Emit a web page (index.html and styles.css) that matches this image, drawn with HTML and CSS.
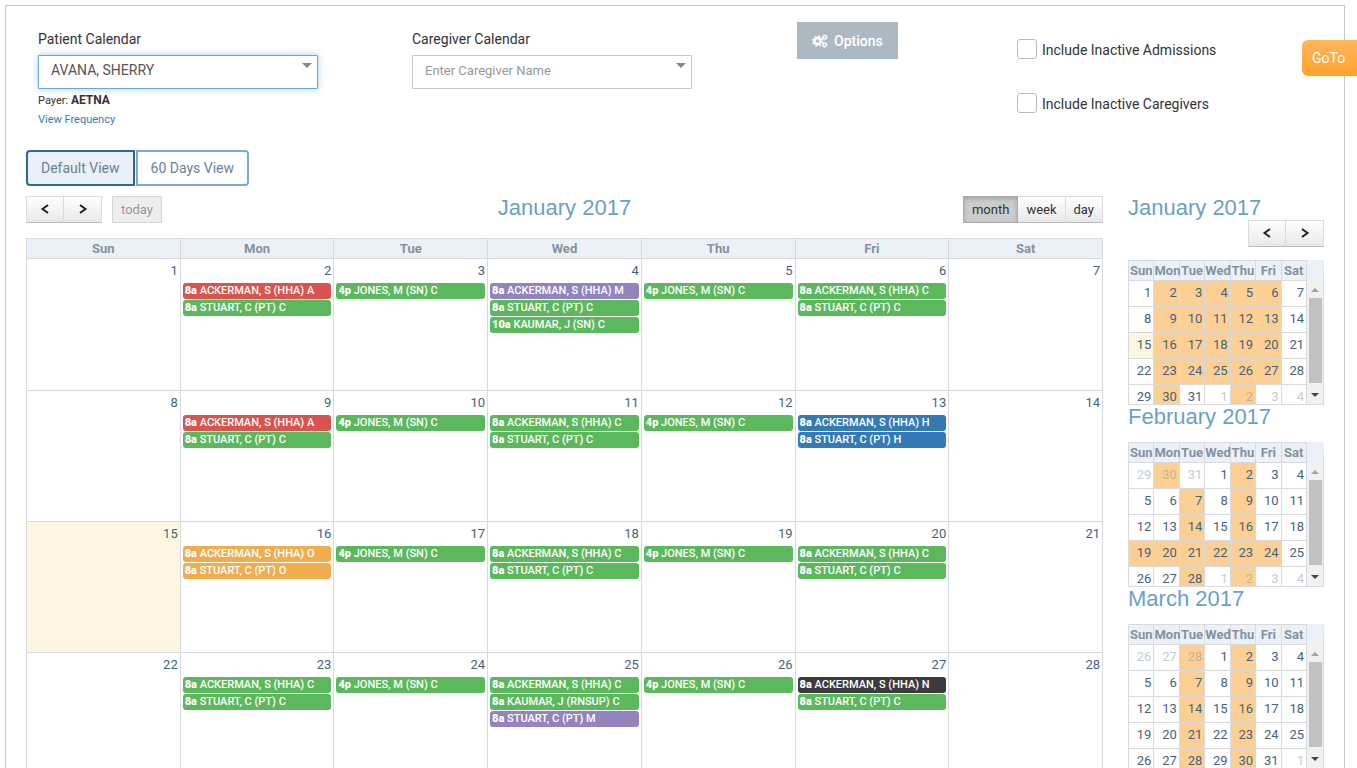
FILE: index.html
```html
<!DOCTYPE html>
<html lang="en">
<head>
  <meta charset="UTF-8" />
  <title>Patient Calendar</title>
  <link rel="stylesheet" href="styles.css">
</head>
<body>

<a class="goto" href="#">GoTo</a>

<div class="page">

  <!-- filters -->
  <form class="filters">
    <div class="field">
      <label for="patient">Patient Calendar</label>
      <div class="select-box">
        <select id="patient" class="active"><option>AVANA, SHERRY</option></select>
      </div>
      <p class="payer">Payer: <b>AETNA</b></p>
      <a class="freq" href="#">View Frequency</a>
    </div>
    <div class="field">
      <label for="caregiver">Caregiver Calendar</label>
      <div class="select-box">
        <select id="caregiver" class="empty"><option>Enter Caregiver Name</option></select>
      </div>
    </div>
    <div>
      <button type="button" class="options-btn">
        <svg width="16" height="14" viewBox="0 0 16 14" fill="none" stroke="#fff">
          <circle cx="5.5" cy="7" r="3" stroke-width="2.4"/>
          <circle cx="5.5" cy="7" r="4.7" stroke-width="1.6" stroke-dasharray="2 1.69"/>
          <circle cx="12.6" cy="3.3" r="1.6" stroke-width="1.3"/>
          <circle cx="12.6" cy="3.3" r="2.6" stroke-width="1" stroke-dasharray="1.2 .84"/>
          <circle cx="12.6" cy="10.7" r="1.6" stroke-width="1.3"/>
          <circle cx="12.6" cy="10.7" r="2.6" stroke-width="1" stroke-dasharray="1.2 .84"/>
        </svg>
        Options
      </button>
    </div>
    <div class="checks">
      <label><input type="checkbox"> <span>Include Inactive Admissions</span></label>
      <label><input type="checkbox"> <span>Include Inactive Caregivers</span></label>
    </div>
  </form>

  <div class="tabs">
    <button class="tab active">Default View</button>
    <button class="tab">60 Days View</button>
  </div>

  <div class="calendars">

    <!-- main month calendar -->
    <div class="main-cal">
      <div class="toolbar">
        <div class="left">
          <div class="btn-group">
            <button class="btn arrow" aria-label="Previous"><svg width="10" height="10" viewBox="0 0 10 10"><path d="M8 1 2.5 5 8 9"/></svg></button>
            <button class="btn arrow" aria-label="Next"><svg width="10" height="10" viewBox="0 0 10 10"><path d="M2 1 7.5 5 2 9"/></svg></button>
          </div>
          <button class="btn today-btn" disabled>today</button>
        </div>
        <h2>January 2017</h2>
        <div class="btn-group right">
          <button class="btn pressed">month</button>
          <button class="btn">week</button>
          <button class="btn">day</button>
        </div>
      </div>

      <table class="month">
        <thead>
          <tr><th>Sun</th><th>Mon</th><th>Tue</th><th>Wed</th><th>Thu</th><th>Fri</th><th>Sat</th></tr>
        </thead>
        <tbody>
          <tr>
            <td><span class="num">1</span></td>
            <td><span class="num">2</span>
              <a class="ev red" href="#"><b>8a</b> ACKERMAN, S (HHA) A</a>
              <a class="ev" href="#"><b>8a</b> STUART, C (PT) C</a></td>
            <td><span class="num">3</span>
              <a class="ev" href="#"><b>4p</b> JONES, M (SN) C</a></td>
            <td><span class="num">4</span>
              <a class="ev purple" href="#"><b>8a</b> ACKERMAN, S (HHA) M</a>
              <a class="ev" href="#"><b>8a</b> STUART, C (PT) C</a>
              <a class="ev" href="#"><b>10a</b> KAUMAR, J (SN) C</a></td>
            <td><span class="num">5</span>
              <a class="ev" href="#"><b>4p</b> JONES, M (SN) C</a></td>
            <td><span class="num">6</span>
              <a class="ev" href="#"><b>8a</b> ACKERMAN, S (HHA) C</a>
              <a class="ev" href="#"><b>8a</b> STUART, C (PT) C</a></td>
            <td><span class="num">7</span></td>
          </tr>
          <tr>
            <td><span class="num">8</span></td>
            <td><span class="num">9</span>
              <a class="ev red" href="#"><b>8a</b> ACKERMAN, S (HHA) A</a>
              <a class="ev" href="#"><b>8a</b> STUART, C (PT) C</a></td>
            <td><span class="num">10</span>
              <a class="ev" href="#"><b>4p</b> JONES, M (SN) C</a></td>
            <td><span class="num">11</span>
              <a class="ev" href="#"><b>8a</b> ACKERMAN, S (HHA) C</a>
              <a class="ev" href="#"><b>8a</b> STUART, C (PT) C</a></td>
            <td><span class="num">12</span>
              <a class="ev" href="#"><b>4p</b> JONES, M (SN) C</a></td>
            <td><span class="num">13</span>
              <a class="ev blue" href="#"><b>8a</b> ACKERMAN, S (HHA) H</a>
              <a class="ev blue" href="#"><b>8a</b> STUART, C (PT) H</a></td>
            <td><span class="num">14</span></td>
          </tr>
          <tr>
            <td class="today"><span class="num">15</span></td>
            <td><span class="num">16</span>
              <a class="ev orange" href="#"><b>8a</b> ACKERMAN, S (HHA) O</a>
              <a class="ev orange" href="#"><b>8a</b> STUART, C (PT) O</a></td>
            <td><span class="num">17</span>
              <a class="ev" href="#"><b>4p</b> JONES, M (SN) C</a></td>
            <td><span class="num">18</span>
              <a class="ev" href="#"><b>8a</b> ACKERMAN, S (HHA) C</a>
              <a class="ev" href="#"><b>8a</b> STUART, C (PT) C</a></td>
            <td><span class="num">19</span>
              <a class="ev" href="#"><b>4p</b> JONES, M (SN) C</a></td>
            <td><span class="num">20</span>
              <a class="ev" href="#"><b>8a</b> ACKERMAN, S (HHA) C</a>
              <a class="ev" href="#"><b>8a</b> STUART, C (PT) C</a></td>
            <td><span class="num">21</span></td>
          </tr>
          <tr>
            <td><span class="num">22</span></td>
            <td><span class="num">23</span>
              <a class="ev" href="#"><b>8a</b> ACKERMAN, S (HHA) C</a>
              <a class="ev" href="#"><b>8a</b> STUART, C (PT) C</a></td>
            <td><span class="num">24</span>
              <a class="ev" href="#"><b>4p</b> JONES, M (SN) C</a></td>
            <td><span class="num">25</span>
              <a class="ev" href="#"><b>8a</b> ACKERMAN, S (HHA) C</a>
              <a class="ev" href="#"><b>8a</b> KAUMAR, J (RNSUP) C</a>
              <a class="ev purple" href="#"><b>8a</b> STUART, C (PT) M</a></td>
            <td><span class="num">26</span>
              <a class="ev" href="#"><b>4p</b> JONES, M (SN) C</a></td>
            <td><span class="num">27</span>
              <a class="ev black" href="#"><b>8a</b> ACKERMAN, S (HHA) N</a>
              <a class="ev" href="#"><b>8a</b> STUART, C (PT) C</a></td>
            <td><span class="num">28</span></td>
          </tr>
        </tbody>
      </table>
    </div>

    <!-- side calendars -->
    <div class="side">
      <h2>January 2017</h2>
      <div class="btn-group side-nav">
        <button class="btn arrow" aria-label="Previous"><svg width="10" height="10" viewBox="0 0 10 10"><path d="M8 1 2.5 5 8 9"/></svg></button>
        <button class="btn arrow" aria-label="Next"><svg width="10" height="10" viewBox="0 0 10 10"><path d="M2 1 7.5 5 2 9"/></svg></button>
      </div>
      <div class="mini">
        <table>
          <thead><tr><th>Sun</th><th>Mon</th><th>Tue</th><th>Wed</th><th>Thu</th><th>Fri</th><th>Sat</th></tr></thead>
          <tbody>
            <tr><td>1</td><td class="hl">2</td><td class="hl">3</td><td class="hl">4</td><td class="hl">5</td><td class="hl">6</td><td>7</td></tr>
            <tr><td>8</td><td class="hl">9</td><td class="hl">10</td><td class="hl">11</td><td class="hl">12</td><td class="hl">13</td><td>14</td></tr>
            <tr><td class="today">15</td><td class="hl">16</td><td class="hl">17</td><td class="hl">18</td><td class="hl">19</td><td class="hl">20</td><td>21</td></tr>
            <tr><td>22</td><td class="hl">23</td><td class="hl">24</td><td class="hl">25</td><td class="hl">26</td><td class="hl">27</td><td>28</td></tr>
            <tr><td>29</td><td class="hl">30</td><td>31</td><td class="out">1</td><td class="hl out">2</td><td class="out">3</td><td class="out">4</td></tr>
          </tbody>
        </table>
        <div class="scroll"><i class="up"></i><i class="thumb"></i><i class="down"></i></div>
      </div>

      <h2>February 2017</h2>
      <div class="mini">
        <table>
          <thead><tr><th>Sun</th><th>Mon</th><th>Tue</th><th>Wed</th><th>Thu</th><th>Fri</th><th>Sat</th></tr></thead>
          <tbody>
            <tr><td class="out">29</td><td class="hl out">30</td><td class="out">31</td><td>1</td><td class="hl">2</td><td>3</td><td>4</td></tr>
            <tr><td>5</td><td>6</td><td class="hl">7</td><td>8</td><td class="hl">9</td><td>10</td><td>11</td></tr>
            <tr><td>12</td><td>13</td><td class="hl">14</td><td>15</td><td class="hl">16</td><td>17</td><td>18</td></tr>
            <tr><td class="hl">19</td><td class="hl">20</td><td class="hl">21</td><td class="hl">22</td><td class="hl">23</td><td class="hl">24</td><td>25</td></tr>
            <tr><td>26</td><td>27</td><td class="hl">28</td><td class="out">1</td><td class="hl out">2</td><td class="out">3</td><td class="out">4</td></tr>
          </tbody>
        </table>
        <div class="scroll"><i class="up"></i><i class="thumb"></i><i class="down"></i></div>
      </div>

      <h2>March 2017</h2>
      <div class="mini">
        <table>
          <thead><tr><th>Sun</th><th>Mon</th><th>Tue</th><th>Wed</th><th>Thu</th><th>Fri</th><th>Sat</th></tr></thead>
          <tbody>
            <tr><td class="out">26</td><td class="out">27</td><td class="hl out">28</td><td>1</td><td class="hl">2</td><td>3</td><td>4</td></tr>
            <tr><td>5</td><td>6</td><td class="hl">7</td><td>8</td><td class="hl">9</td><td>10</td><td>11</td></tr>
            <tr><td>12</td><td>13</td><td class="hl">14</td><td>15</td><td class="hl">16</td><td>17</td><td>18</td></tr>
            <tr><td>19</td><td>20</td><td class="hl">21</td><td>22</td><td class="hl">23</td><td>24</td><td>25</td></tr>
            <tr><td>26</td><td>27</td><td class="hl">28</td><td>29</td><td class="hl">30</td><td>31</td><td class="out">1</td></tr>
          </tbody>
        </table>
        <div class="scroll"><i class="up"></i><i class="thumb"></i><i class="down"></i></div>
      </div>
    </div>

  </div>
</div>

</body>
</html>
```

FILE: styles.css
```css
* {
  box-sizing: border-box;
}

body {
  margin: 0;
  padding: 5px 12px 0 5px;
  height: 100vh;
  overflow: hidden;
  font-family: Roboto, sans-serif;
  font-size: 14px;
  color: #333;
  background: #fff;
}

button, select, input {
  font-family: inherit;
}

a {
  text-decoration: none;
}

h2 {
  margin: 0;
  font: 22px/24px "Liberation Sans", Arial, sans-serif;
  color: #6a9fcc;
}

.page {
  border: 1px solid #c9c9cc;
  padding: 16px 20px;
}

.goto {
  position: absolute;
  top: 40px;
  right: 0;
  width: 55px;
  line-height: 36px;
  padding-left: 10px;
  border-radius: 6px 0 0 6px;
  background: linear-gradient(#ffb65c, #ffa42c);
  color: #fff;
}

/* filters */
.filters {
  display: grid;
  grid-template-columns: 374fr 385fr 220fr 307fr;
  padding-left: 12px;
  height: 128px;
}

.field {
  padding-top: 7px;
}

.field label {
  display: block;
  line-height: 20px;
  margin-bottom: 6px;
}

.select-box {
  position: relative;
  width: 280px;
  max-width: 95%;
}

.select-box::after {
  content: "";
  position: absolute;
  top: 8px;
  right: 6px;
  border: 5px solid transparent;
  border-top-color: #888;
  border-bottom: 0;
  pointer-events: none;
}

select {
  appearance: none;
  display: block;
  width: 100%;
  height: 34px;
  padding: 0 24px 4px 12px;
  font-size: 13px;
  color: #555;
  background: #fff;
  border: 1px solid #c8c8c8;
  border-radius: 1px;
}

select.active {
  font-size: 14px;
  border-color: #6fa4d3;
  box-shadow: 0 0 6px rgba(102, 175, 233, .6);
}

select.empty {
  color: #999;
}

.payer {
  margin: 0;
  padding-top: 1px;
  font-size: 11px;
  line-height: 20px;
}

.payer b {
  font-size: 12px;
}

.freq {
  display: block;
  font-size: 11px;
  line-height: 18px;
  color: #337ab7;
}

.options-btn {
  display: flex;
  align-items: center;
  gap: 6px;
  height: 37px;
  padding: 0 15px;
  border: 0;
  background: #acb9c2;
  color: #fff;
  font-size: 14px;
  font-weight: 500;
}

.checks label {
  display: flex;
  align-items: center;
  gap: 5px;
  height: 54px;
}

.checks span {
  padding-top: 2px;
}

.checks input {
  appearance: none;
  width: 20px;
  height: 20px;
  margin: 0;
  border: 1px solid #bbb;
  border-radius: 3px;
  background: #fff;
}

/* view tabs */
.tabs {
  display: flex;
  gap: 1px;
  margin-bottom: 10px;
}

.tab {
  height: 36px;
  padding: 0 13px;
  border: 2px solid #7ea9d0;
  border-radius: 0 4px 4px 0;
  background: #fff;
  color: #6c8296;
  font-size: 14px;
}

.tab.active {
  border-color: #2f6692;
  border-radius: 4px 0 0 4px;
  background: #e9f0f7;
}

.calendars {
  display: grid;
  grid-template-columns: 1fr 196px;
  gap: 25px;
}

/* toolbar */
.toolbar {
  display: grid;
  grid-template-columns: 1fr auto 1fr;
  height: 42px;
}

.left {
  display: flex;
  gap: 10px;
}

.btn-group {
  display: flex;
}

.right {
  justify-content: flex-end;
}

.btn {
  height: 27px;
  padding: 0 8px;
  border: 1px solid #dcdcdc;
  border-bottom-color: #bbb;
  background: linear-gradient(#fff, #e8e8e8);
  color: #333;
  font-size: 13px;
}

.btn + .btn {
  border-left: 0;
}

.btn.arrow {
  width: 38px;
}

.btn.pressed {
  background: #ccc;
  border-color: #aaa;
  box-shadow: inset 0 2px 4px rgba(0, 0, 0, .2);
}

.btn.today-btn {
  background: #eee;
  border-color: #d5d5d5;
  color: #999;
}

.arrow svg {
  fill: none;
  stroke: #222;
  stroke-width: 2;
}

/* month table */
table {
  border-collapse: collapse;
  table-layout: fixed;
  font-size: 13px;
  color: #48617d;
}

th {
  height: 20px;
  padding: 0;
  background: #ecf1f8;
  color: #8293a2;
  font-weight: bold;
  line-height: 19px;
}

th, td {
  border: 1px solid #d8dade;
}

.month {
  width: 100%;
}

.month td {
  height: 131px;
  padding: 0 2px;
  vertical-align: top;
}

.month tbody tr:first-child td {
  height: 132px;
}

.today {
  background: #fdf6e1;
}

.num {
  display: block;
  height: 24px;
  line-height: 24px;
  text-align: right;
}

.ev {
  display: block;
  margin-bottom: 1px;
  padding: 0 2px;
  border-radius: 3px;
  background: #5cb85c;
  color: #fff;
  font-size: 11px;
  font-weight: 500;
  line-height: 16px;
  white-space: nowrap;
  overflow: hidden;
}

.ev b {
  font-weight: 900;
}

.red { background: #d9534f; }
.purple { background: #9484be; }
.blue { background: #337ab7; }
.orange { background: #f0ad4e; }
.black { background: #3b3b3b; }

/* small calendars */
.side-nav {
  justify-content: flex-end;
  margin-bottom: 13px;
}

.mini {
  display: flex;
  height: 145px;
  overflow: hidden;
  border-bottom: 1px solid #d8dade;
}

.mini + h2 {
  margin-bottom: 13px;
}

.mini table {
  width: 179px;
  height: 151px;
}

.mini td {
  height: 26px;
  padding: 0 2px 2px 0;
  text-align: right;
}

.mini th {
  white-space: nowrap;
}

.hl {
  background: #fcd094;
}

.out {
  color: #c5ccd3;
}

.hl.out {
  color: #c9b08c;
}

.scroll {
  flex: 1;
  display: flex;
  flex-direction: column;
  align-items: center;
  border-top: 20px solid #ecf1f8;
  border-right: 1px solid #d8dade;
  background: #f1f1f1;
}

.scroll i {
  border: 4px solid transparent;
}

.scroll .up {
  margin: 8px 0 6px;
  border-top: 0;
  border-bottom-color: #a3a3a3;
}

.scroll .thumb {
  width: 13px;
  height: 85px;
  border: 0;
  background: #c1c1c1;
}

.scroll .down {
  margin-top: 10px;
  border-bottom: 0;
  border-top-color: #444;
}
```
